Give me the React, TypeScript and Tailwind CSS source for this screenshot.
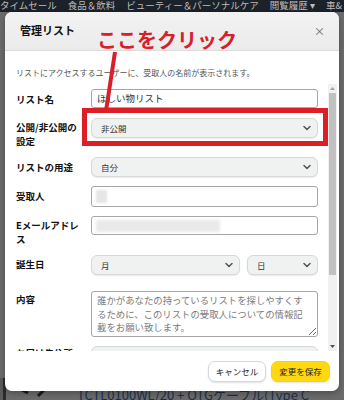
import React from "react";

const F = { fontFamily: '"Noto Sans CJK JP", "Noto Sans", sans-serif' };

function Chevron() {
  return (
    <svg width="8" height="6" viewBox="0 0 8 6" className="shrink-0">
      <polyline points="1,1.5 4,4.5 7,1.5" fill="none" stroke="#555" strokeWidth="1.5" strokeLinecap="round" strokeLinejoin="round" />
    </svg>
  );
}

function SelectBox({ text, className = "" }: { text: string; className?: string }) {
  return (
    <div className={`h-[20px] flex items-center justify-between pl-[9px] pr-[6px] bg-[#f0f2f2] border border-[#d5d9d9] rounded-[6px] shadow-[0_1px_1px_rgba(0,0,0,0.08)] ${className}`}>
      <span className="text-[8.5px] leading-[12px] text-[#333]">{text}</span>
      <Chevron />
    </div>
  );
}

function Row({ label, children, mb, pt = "pt-[3px]" }: { label: React.ReactNode; children: React.ReactNode; mb: string; pt?: string }) {
  return (
    <div className={`flex items-start ${mb}`}>
      <div className={`w-[75px] shrink-0 pr-[6px] ${pt} text-[9.5px] leading-[14px] font-bold text-[#111]`}>{label}</div>
      <div className="flex-1 min-w-0">{children}</div>
    </div>
  );
}

export default function App() {
  return (
    <div className="relative w-[344px] h-[400px] overflow-hidden bg-[#6b6b6b]" style={F}>
      {/* dimmed page nav */}
      <div className="h-[12px] bg-[#1c2229] flex items-start gap-[11px] whitespace-nowrap overflow-hidden text-[9.5px] leading-[11px] text-[#bdbdbd]">
        <span>タイムセール</span>
        <span>食品＆飲料</span>
        <span>ビューティー＆パーソナルケア</span>
        <span>閲覧履歴 ▾</span>
        <span>車&amp;</span>
      </div>
      {/* dimmed page bottom */}
      <div className="absolute left-0 top-[378px] w-[344px] h-[22px] flex items-end">
        <div className="w-[3px] h-[22px] bg-[#5a5a5a]" />
        <div className="w-[3px] h-[22px] bg-[#2c2c2c]" />
        <svg width="40" height="14" viewBox="0 0 40 14" className="ml-[8px] mb-[2px]">
          <path d="M4 4 L14 9" stroke="#1a1a1a" strokeWidth="3" />
          <path d="M24 12 L34 2" stroke="#1a1a1a" strokeWidth="3" />
        </svg>
        <span className="ml-[23px] text-[13px] leading-[14px] text-[#1d2f4d] whitespace-nowrap -mb-[2px]">TCTL0100WL/20 + OTGケーブル(Type C</span>
      </div>

      {/* modal */}
      <div className="absolute left-[5px] top-[12px] w-[334px] h-[379px] bg-white rounded-[7px] overflow-hidden flex flex-col shadow-[0_2px_6px_rgba(0,0,0,0.3)]">
        <div className="h-[39px] shrink-0 flex items-center justify-between pl-[15px] pr-[14px] bg-gradient-to-b from-[#f2f2f2] to-[#ebebeb] border-b border-[#dcdcdc]">
          <span className="text-[11px] font-bold text-[#111] leading-[14px] -mt-[2px]">管理リスト</span>
          <span className="text-[11px] text-[#666] leading-[12px] -mt-[1px]">×</span>
        </div>
        <div className="pl-[11px] pt-[16px] text-[8px] leading-[12px] text-[#565656] h-[33px] shrink-0">
          リストにアクセスするユーザーに、受取人の名前が表示されます。
        </div>
        <div className="flex h-[267px] shrink-0 overflow-hidden">
          <div className="flex-1 pl-[11px] pr-[10px] pt-[5px] overflow-hidden">
            <Row label="リスト名" mb="mb-[10px]">
              <div className="h-[19px] border border-[#a6a6a6] rounded-[3px] flex items-center pl-[5px] text-[9.5px] text-[#333]">ほしい物リスト</div>
            </Row>
            <Row label="公開/非公開の設定" mb="mb-[9px]" pt="pt-[2px]">
              <SelectBox text="非公開" />
            </Row>
            <Row label="リストの用途" mb="mb-[9px]">
              <SelectBox text="自分" />
            </Row>
            <Row label="受取人" mb="mb-[9px]">
              <div className="h-[21px] border border-[#a6a6a6] rounded-[3px] flex items-center pl-[4px]">
                <div className="w-[11px] h-[13px] bg-[#e6e6e6] blur-[1px]" />
              </div>
            </Row>
            <Row label="Eメールアドレス" mb="mb-[9px]" pt="pt-[2px]">
              <div className="h-[19px] border border-[#a6a6a6] rounded-[3px] flex items-center pl-[4px]">
                <div className="w-[124px] h-[12px] bg-[#e9e9e9] blur-[1.5px]" />
              </div>
            </Row>
            <Row label="誕生日" mb="mb-[16px]" pt="pt-[2px]">
              <div className="flex gap-[7px]">
                <SelectBox text="月" className="w-[149px]" />
                <SelectBox text="日" className="flex-1" />
              </div>
            </Row>
            <Row label="内容" mb="mb-[9px]" pt="pt-[1px]">
              <textarea
                readOnly
                className="block w-full h-[46px] border border-[#a6a6a6] rounded-[3px] px-[5px] pt-[2px] text-[9.4px] leading-[13.5px] placeholder:text-[#7a7a7a] outline-none"
                style={F}
                placeholder="誰かがあなたの持っているリストを探しやすくするために、このリストの受取人についての情報記載をお願い致します。"
              />
            </Row>
            <Row label="お届け先住所" mb="mb-[9px]" pt="pt-0">
              <SelectBox text="登録なし" />
            </Row>
          </div>
          {/* scrollbar */}
          <div className="w-[9px] mr-[2px] bg-[#f1f1f1] flex flex-col items-center">
            <div className="h-[9px] w-full flex items-center justify-center">
              <svg width="5" height="3" viewBox="0 0 5 3"><polygon points="0,3 2.5,0 5,3" fill="#a3a3a3" /></svg>
            </div>
            <div className="w-[7px] h-[182px] bg-[#c1c1c1]" />
            <div className="flex-1" />
            <div className="h-[9px] w-full flex items-center justify-center">
              <svg width="5" height="3" viewBox="0 0 5 3"><polygon points="0,0 2.5,3 5,0" fill="#505050" /></svg>
            </div>
          </div>
        </div>
        <div className="flex-1 flex items-center justify-end gap-[5px] pr-[9px]">
          <div className="w-[58px] h-[21px] rounded-[7px] border border-[#d5d9d9] bg-white shadow-[0_1px_2px_rgba(0,0,0,0.12)] flex items-center justify-center text-[8.5px] text-[#222]">キャンセル</div>
          <div className="w-[59px] h-[21px] rounded-[7px] border border-[#fcd200] bg-[#ffd814] shadow-[0_1px_2px_rgba(0,0,0,0.12)] flex items-center justify-center text-[8.5px] text-[#222]">変更を保存</div>
        </div>
      </div>

      {/* annotation overlay */}
      <div className="absolute left-[97px] top-[29px] text-[20px] leading-[22px] font-bold text-[#d8202a] whitespace-nowrap">ここをクリック</div>
      <svg className="absolute left-0 top-0" width="344" height="400" viewBox="0 0 344 400" style={{ pointerEvents: "none" }}>
        <line x1="115" y1="52" x2="106" y2="111" stroke="#d8202a" strokeWidth="4" />
      </svg>
      <div className="absolute left-[82px] top-[108px] w-[246px] h-[38px] border-[5px] border-[#dc1f27]" />
    </div>
  );
}
